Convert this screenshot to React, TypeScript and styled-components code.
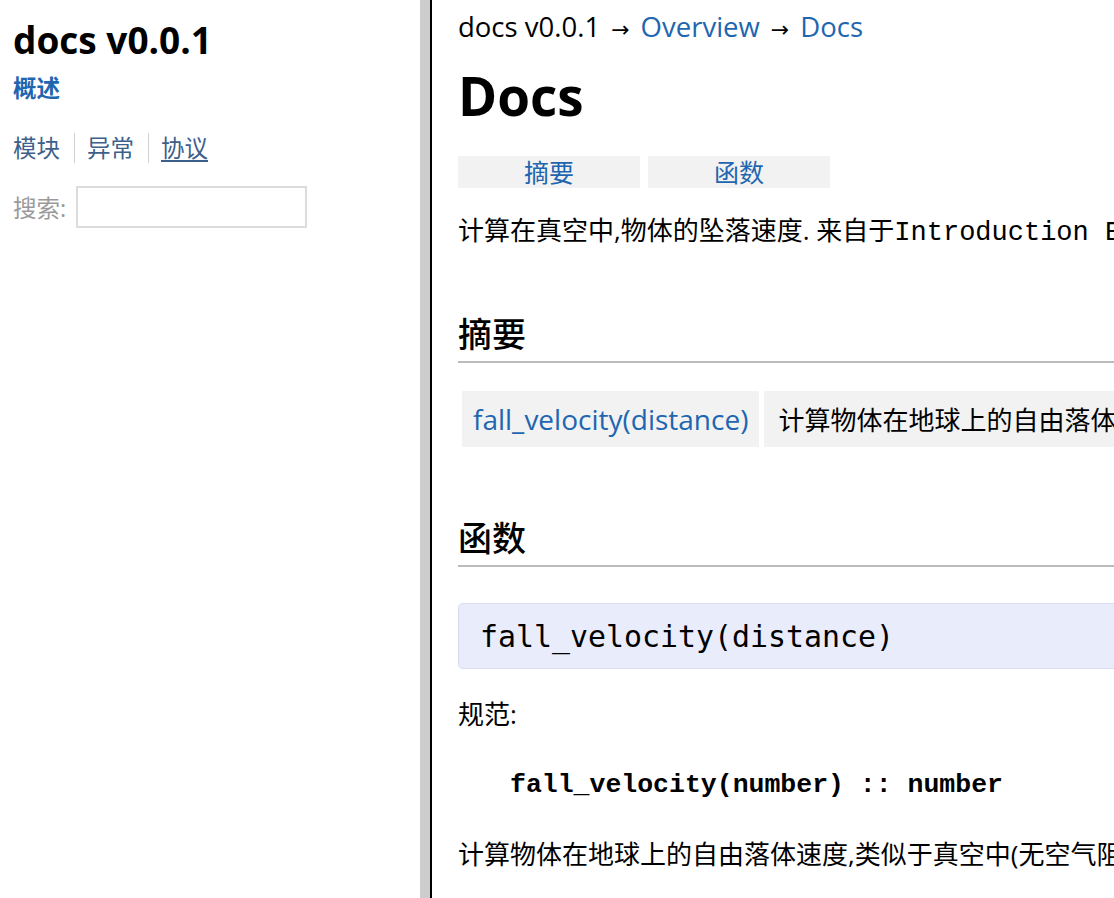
import React from 'react';
import styled, { createGlobalStyle } from 'styled-components';

const GlobalStyle = createGlobalStyle`
  html, body, #root {
    margin: 0;
    height: 100%;
  }
  body {
    background: #ffffff;
    overflow: hidden;
    font-family: 'Open Sans', 'Noto Sans CJK SC', sans-serif;
    color: #000000;
  }
`;

const Frame = styled.div`
  display: flex;
  height: 898px;
  width: 1114px;
  overflow: hidden;
`;

const Sidebar = styled.aside`
  width: 407px;
  flex: none;
  padding-left: 13px;
  background: #ffffff;
`;

const Divider = styled.div`
  width: 10px;
  flex: none;
  background: #cdcdcd;
  border-right: 2px solid #000000;
`;

const Main = styled.main`
  flex: 1;
  min-width: 0;
  overflow: hidden;
`;

const MainInner = styled.div`
  width: 1100px;
  padding: 10px 0 0 26px;
  white-space: nowrap;
`;

const SideTitle = styled.h1`
  margin: 18px 0 0;
  font-size: 37px;
  line-height: 44px;
  font-weight: 700;
`;

const OverviewLink = styled.a`
  display: block;
  margin-top: 11px;
  font-size: 23.5px;
  line-height: 30px;
  font-weight: 700;
  color: #1e66b0;
  text-decoration: none;
`;

const NavList = styled.nav`
  display: flex;
  margin-top: 30px;
`;

const NavItem = styled.a<{ $first?: boolean; $underline?: boolean }>`
  font-size: 23.5px;
  line-height: 30px;
  color: #3d5f8c;
  padding: 0 14px 0 ${(p) => (p.$first ? '0' : '12px')};
  border-left: ${(p) => (p.$first ? 'none' : '1px solid #d0d0d0')};
  text-decoration: ${(p) => (p.$underline ? 'underline' : 'none')};
  text-underline-offset: 3px;
`;

const SearchRow = styled.div`
  display: flex;
  align-items: center;
  margin-top: 23px;
  gap: 10px;
`;

const SearchLabel = styled.label`
  font-size: 23.5px;
  color: #9a9a9a;
`;

const SearchInput = styled.input`
  width: 231px;
  height: 42px;
  box-sizing: border-box;
  border: 2px solid #dcdcdc;
  background: #ffffff;
  margin: 0;
`;

const Breadcrumb = styled.div`
  font-size: 27.5px;
  line-height: 34px;
`;

const Crumb = styled.a`
  color: #1e66b0;
  text-decoration: none;
`;

const Arrow = styled.span`
  font-family: 'DejaVu Sans', sans-serif;
  font-size: 22px;
  margin: 0 11px;
`;

const PageTitle = styled.h1`
  margin: 19px 0 0;
  font-size: 53px;
  line-height: 60px;
  font-weight: 700;
`;

const Tabs = styled.div`
  display: flex;
  gap: 8px;
  margin-top: 30px;
`;

const Tab = styled.a`
  width: 182px;
  height: 32px;
  background: #f2f2f2;
  color: #1e66b0;
  font-size: 25px;
  line-height: 32px;
  text-align: center;
  text-decoration: none;
`;

const Paragraph = styled.p<{ $top: number }>`
  margin: ${(p) => p.$top}px 0 0;
  font-size: 26px;
  line-height: 34px;
`;

const InlineCode = styled.code`
  font-family: 'Liberation Mono', 'Courier New', monospace;
  font-size: 27px;
`;

const SectionTitle = styled.h2<{ $top: number }>`
  margin: ${(p) => p.$top}px 0 0;
  font-size: 34px;
  line-height: 42px;
  font-weight: 500;
  padding-bottom: 6px;
  border-bottom: 2px solid #bcbcbc;
`;

const SummaryTable = styled.table`
  margin-top: 24px;
  margin-left: -1px;
  border-spacing: 5px 4px;
`;

const NameCell = styled.td`
  background: #f2f2f2;
  height: 56px;
  padding: 0 11px;
  font-size: 28px;
`;

const DescCell = styled.td`
  background: #f2f2f2;
  height: 56px;
  padding: 0 14px;
  font-size: 26px;
`;

const FnLink = styled.a`
  color: #1e66b0;
  text-decoration: none;
`;

const Signature = styled.div`
  margin-top: 36px;
  height: 66px;
  box-sizing: border-box;
  border: 1px solid #d9dcee;
  border-radius: 5px;
  background: #e9ecfb;
  padding-left: 21px;
  display: flex;
  align-items: center;
  font-family: 'DejaVu Sans Mono', monospace;
  font-size: 29.9px;
`;

const Spec = styled.pre`
  margin: 37px 0 0 52px;
  font-family: 'Liberation Mono', 'Courier New', monospace;
  font-size: 26.5px;
  line-height: 34px;
  font-weight: 700;
`;

export default function App() {
  return (
    <>
      <GlobalStyle />
      <Frame>
        <Sidebar>
          <SideTitle>docs v0.0.1</SideTitle>
          <OverviewLink>概述</OverviewLink>
          <NavList>
            <NavItem $first>模块</NavItem>
            <NavItem>异常</NavItem>
            <NavItem $underline>协议</NavItem>
          </NavList>
          <SearchRow>
            <SearchLabel>搜索:</SearchLabel>
            <SearchInput type="text" />
          </SearchRow>
        </Sidebar>
        <Divider />
        <Main>
          <MainInner>
            <Breadcrumb>
              docs v0.0.1<Arrow>→</Arrow>
              <Crumb>Overview</Crumb>
              <Arrow>→</Arrow>
              <Crumb>Docs</Crumb>
            </Breadcrumb>
            <PageTitle>Docs</PageTitle>
            <Tabs>
              <Tab>摘要</Tab>
              <Tab>函数</Tab>
            </Tabs>
            <Paragraph $top={25}>
              计算在真空中,物体的坠落速度. 来自于<InlineCode>Introduction Elixir</InlineCode>
            </Paragraph>
            <SectionTitle $top={63}>摘要</SectionTitle>
            <SummaryTable>
              <tbody>
                <tr>
                  <NameCell>
                    <FnLink>fall_velocity(distance)</FnLink>
                  </NameCell>
                  <DescCell>计算物体在地球上的自由落体速度,类似于真空中(无空气阻力).</DescCell>
                </tr>
              </tbody>
            </SummaryTable>
            <SectionTitle $top={66}>函数</SectionTitle>
            <Signature>fall_velocity(distance)</Signature>
            <Paragraph $top={28}>规范:</Paragraph>
            <Spec>fall_velocity(number) :: number</Spec>
            <Paragraph $top={35}>计算物体在地球上的自由落体速度,类似于真空中(无空气阻力).</Paragraph>
          </MainInner>
        </Main>
      </Frame>
    </>
  );
}
